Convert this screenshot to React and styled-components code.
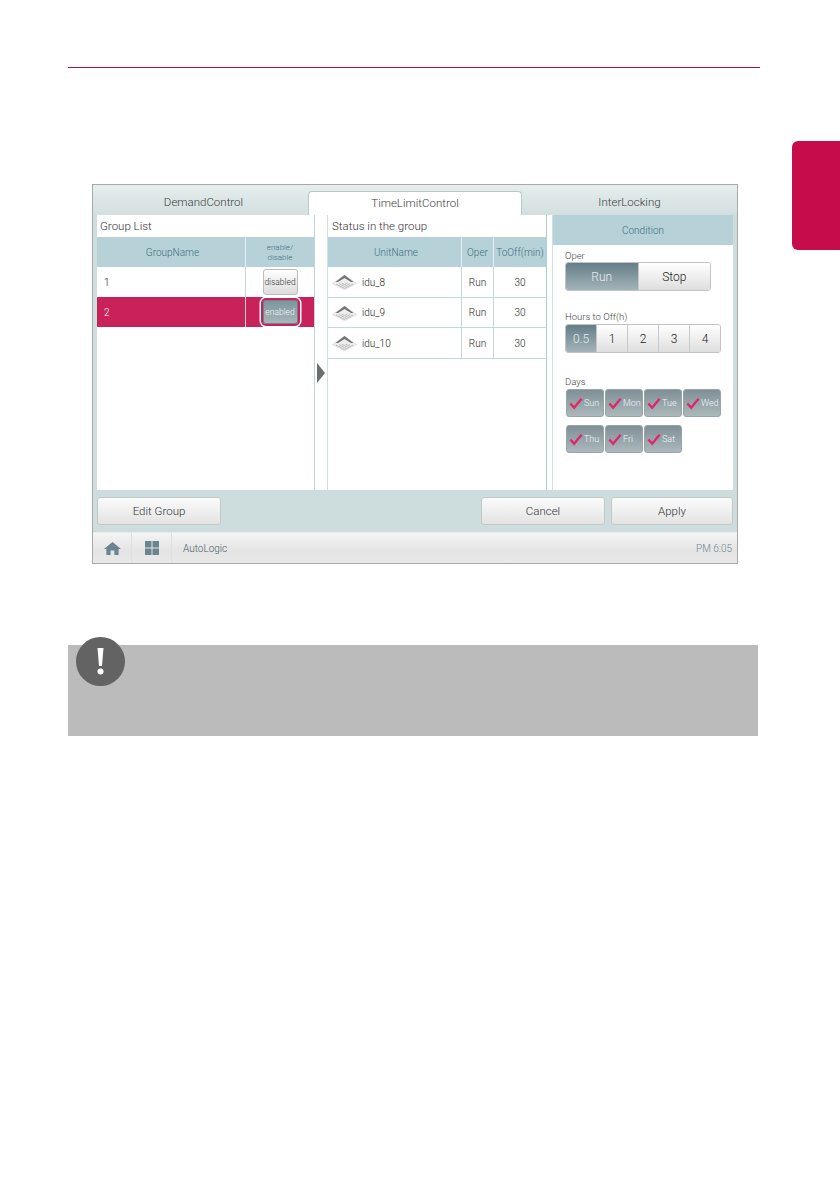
import styled, { createGlobalStyle } from 'styled-components';

const GlobalStyle = createGlobalStyle`
  html, body { margin: 0; padding: 0; background: #fff; }
  body { font-family: Roboto, "Liberation Sans", sans-serif; font-weight: 300; }
  * { box-sizing: border-box; }
`;

const Page = styled.div`
  width: 840px;
  height: 1192px;
  display: flex;
  overflow: hidden;
`;
const Main = styled.div`
  width: 692px;
  margin-left: 68px;
  padding-top: 67px;
`;
const TopRule = styled.div`
  height: 1px;
  background: #a61542;
`;
const SideTab = styled.div`
  width: 48px;
  height: 109px;
  margin: 141px 0 0 32px;
  background: #c60c4b;
  border-radius: 6px 0 0 6px;
`;

const Screen = styled.div`
  width: 646px;
  height: 380px;
  margin: 116px 0 0 24px;
  border: 1px solid #a9a9a9;
  background: #cddcdc;
  display: flex;
  flex-direction: column;
`;
const Tabs = styled.div`
  height: 30px;
  display: flex;
  background: linear-gradient(#e6eded, #d3dfdf);
`;
const Tab = styled.div`
  width: ${p => p.$w}px;
  margin-top: ${p => (p.$on ? 6 : 0)}px;
  height: ${p => (p.$on ? 24 : 30)}px;
  padding: ${p => (p.$on ? '0 0 2px' : `3px 0 0 ${p.$shift || 0}px`)};
  display: flex;
  align-items: center;
  justify-content: center;
  font-size: 11.5px;
  color: #3c3c3c;
  background: ${p => (p.$on ? '#fff' : 'transparent')};
  border-radius: ${p => (p.$on ? '4px 4px 0 0' : '0')};
  border: ${p => (p.$on ? '1px solid #b7c9cc' : 'none')};
  border-bottom: none;
`;

const Body = styled.div`
  height: 275px;
  margin-left: 4px;
  margin-right: 4px;
  background: #fff;
  display: flex;
`;
const Panel = styled.div`
  width: ${p => p.$w}px;
  border-right: ${p => (p.$edge ? `1px solid ${p.$edge}` : 'none')};
  border-left: ${p => (p.$start ? `1px solid ${p.$start}` : 'none')};
  display: flex;
  flex-direction: column;
`;
const PanelTitle = styled.div`
  height: 22px;
  padding-left: ${p => p.$pad || 3}px;
  display: flex;
  align-items: center;
  font-size: 11.5px;
  color: #333;
`;
const Row = styled.div`
  display: grid;
  grid-template-columns: ${p => p.$cols};
  height: ${p => p.$h || 30}px;
  background: ${p => (p.$sel ? '#c9215a' : p.$head ? '#b6d1d8' : '#fff')};
  border-bottom: ${p => (p.$line ? '1px solid #c4d8dc' : 'none')};
`;
const HeadCell = styled.div`
  display: flex;
  align-items: center;
  justify-content: center;
  padding: 2px 0 0 ${p => p.$shift || 0}px;
  text-align: center;
  font-size: ${p => p.$size || 10}px;
  line-height: 10px;
  color: #3f6f7b;
  border-right: ${p => (p.$line ? '1px solid #e4eef0' : 'none')};
`;
const Cell = styled.div`
  display: flex;
  align-items: center;
  justify-content: ${p => (p.$left ? 'flex-start' : 'center')};
  padding-left: ${p => (p.$left ? p.$pad || 7 : 0)}px;
  gap: 5px;
  font-size: 10px;
  color: ${p => (p.$sel ? '#fff' : '#222')};
  border-right: ${p => (p.$line ? '1px solid #c4d8dc' : 'none')};
`;
const ToggleBtn = styled.div`
  width: 35px;
  height: ${p => (p.$on ? 24 : 26)}px;
  border-radius: 3px;
  display: flex;
  align-items: center;
  justify-content: center;
  font-size: 8.5px;
  color: ${p => (p.$on ? '#f4f7f8' : '#333')};
  background: ${p => (p.$on ? 'linear-gradient(#7d959c, #a7b6ba)' : 'linear-gradient(#fff, #dcdcdc)')};
  border: 1px solid ${p => (p.$on ? '#6f858c' : '#bbb')};
  box-shadow: ${p => (p.$on ? '0 0 0 2px #c9215a, 0 0 0 3.5px #fff' : 'none')};
`;
const Gap = styled.div`
  width: ${p => p.$w}px;
  background: #fff;
  display: flex;
  align-items: center;
  justify-content: center;
  padding-top: 40px;
  border-right: ${p => (p.$edge ? `1px solid ${p.$edge}` : 'none')};
`;
const Arrow = styled.div`
  width: 0;
  height: 0;
  margin-left: -1px;
  border-top: 10.5px solid transparent;
  border-bottom: 10.5px solid transparent;
  border-left: 8px solid #6b6f72;
`;

const Condition = styled.div`
  width: 180px;
  display: flex;
  flex-direction: column;
`;
const CondHead = styled.div`
  height: 30px;
  background: #b6d1d8;
  color: #3f6f7b;
  font-size: 10px;
  display: flex;
  align-items: center;
  justify-content: center;
`;
const CondBody = styled.div`
  padding: 5px 0 0 12px;
`;
const FieldLabel = styled.div`
  font-size: 9.5px;
  line-height: 12px;
  height: ${p => p.$h || 12}px;
  margin-top: ${p => p.$top || 0}px;
  color: #444;
`;
const Segments = styled.div`
  display: flex;
  width: ${p => p.$w}px;
  height: 29px;
  border-radius: 3px;
  overflow: hidden;
  border: 1px solid #c0c4c5;
`;
const Segment = styled.div`
  flex: 1;
  display: flex;
  align-items: center;
  justify-content: center;
  font-size: 12px;
  color: ${p => (p.$on ? '#e8eeef' : '#222')};
  background: ${p => (p.$on ? 'linear-gradient(#647e87, #a3b4b9)' : 'linear-gradient(#fff, #dedede)')};
  border-right: ${p => (p.$last ? 'none' : '1px solid #c4c8c9')};
`;
const Days = styled.div`
  display: grid;
  grid-template-columns: repeat(4, 38px);
  gap: 8px 1px;
  margin-left: 1px;
`;
const Day = styled.div`
  height: 28px;
  border-radius: 3px;
  background: linear-gradient(#7f9096, #abb8bc);
  border: 1px solid #97a5a9;
  display: flex;
  align-items: center;
  gap: 1px;
  padding-left: 2px;
  font-size: 9px;
  color: #f4f7f8;
`;

const Actions = styled.div`
  height: 42px;
  padding: 7px 4px;
  display: flex;
  gap: 6px;
`;
const ActionBtn = styled.div`
  width: ${p => p.$w}px;
  height: 28px;
  margin-right: ${p => p.$after || 0}px;
  border-radius: 3px;
  background: linear-gradient(#fbfbfb, #e3e3e3);
  border: 1px solid #c2c8c8;
  display: flex;
  align-items: center;
  justify-content: center;
  font-size: 11.5px;
  color: #333;
`;
const StatusBar = styled.div`
  flex: 1;
  display: flex;
  align-items: center;
  background: linear-gradient(#f4f4f4, #e4e4e4 60%, #e9e9e9);
  border-top: 1px solid #e8eded;
`;
const BarIcon = styled.div`
  width: ${p => p.$w}px;
  height: 100%;
  display: flex;
  align-items: center;
  justify-content: center;
  border-right: 1px solid #dfe1e1;
`;
const BarLabel = styled.div`
  margin-left: 11px;
  font-size: 10px;
  color: #466069;
`;
const Clock = styled.div`
  margin-left: auto;
  margin-right: 5px;
  font-size: 10px;
  color: #6c8791;
`;

const Note = styled.div`
  position: relative;
  width: 690px;
  height: 91px;
  margin-top: 81px;
  background: #bbbbbb;
`;
const NoteBadge = styled.div`
  position: absolute;
  left: 8px;
  top: -8px;
  width: 49px;
  height: 49px;
  border-radius: 50%;
  background: #636363;
  display: flex;
  align-items: center;
  justify-content: center;
`;

const Cassette = () => (
  <svg width="25" height="16" viewBox="0 0 25 16" style={{ flex: 'none' }}>
    <path d="M0.5 9.5 L11.5 2 Q12.5 1.4 13.5 2 L24.5 9.5 L14 15 Q12.5 15.7 11 15 Z" fill="#eeeeee" stroke="#cfcfcf" strokeWidth="0.6" />
    <path d="M3.5 8 L12.5 1 L21.5 8 L19 8 L12.5 4 L6 8 Z" fill="#707273" />
    <path d="M4 10 L12.5 14.4 L21 10 M7 9.6 L12.5 12.5 L18 9.6 M9.5 9 L12.5 10.6 L15.5 9" fill="none" stroke="#b4b4b4" strokeWidth="0.9" />
  </svg>
);
const HomeIcon = () => (
  <svg width="17" height="15" viewBox="0 0 17 14">
    <path d="M8.5 0.5 L17 7.5 L14.6 7.5 L14.6 13.5 L10.4 13.5 L10.4 9 L6.6 9 L6.6 13.5 L2.4 13.5 L2.4 7.5 L0 7.5 Z" fill="#6a8490" />
  </svg>
);
const GridIcon = () => (
  <svg width="14" height="14" viewBox="0 0 14 14" fill="#6a8490">
    <rect x="0" y="0" width="6.5" height="6.5" />
    <rect x="7.5" y="0" width="6.5" height="6.5" />
    <rect x="0" y="7.5" width="6.5" height="6.5" />
    <rect x="7.5" y="7.5" width="6.5" height="6.5" />
  </svg>
);
const Check = () => (
  <svg width="14" height="13" viewBox="0 0 15 13" style={{ flex: 'none' }}>
    <path d="M1.5 6.5 L5.5 11 L13.5 1.5" fill="none" stroke="#e0256a" strokeWidth="2.6" />
  </svg>
);
const Bang = () => (
  <svg width="7" height="27" viewBox="0 0 7 27" fill="#fff">
    <path d="M0.5 0 H6.5 L5 18 H2 Z" />
    <circle cx="3.5" cy="23.5" r="3" />
  </svg>
);

const groupCols = '149px 68px';
const unitCols = '134px 32px 52px';
const units = [['idu_8', 31], ['idu_9', 30], ['idu_10', 31]];
const hours = ['0.5', '1', '2', '3', '4'];
const days = ['Sun', 'Mon', 'Tue', 'Wed', 'Thu', 'Fri', 'Sat'];

export default function App() {
  return (
    <Page>
      <GlobalStyle />
      <Main>
        <TopRule />
        <Screen>
          <Tabs>
            <Tab $w={215} $shift={6}>DemandControl</Tab>
            <Tab $w={214} $on>TimeLimitControl</Tab>
            <Tab $w={215}>InterLocking</Tab>
          </Tabs>
          <Body>
            <Panel $w={218} $edge="#bcd6da">
              <PanelTitle>Group List</PanelTitle>
              <Row $head $cols={groupCols}>
                <HeadCell $shift={3} $line>GroupName</HeadCell>
                <HeadCell $size={8}>enable/<br />disable</HeadCell>
              </Row>
              <Row $cols={groupCols}>
                <Cell $left $line>1</Cell>
                <Cell><ToggleBtn>disabled</ToggleBtn></Cell>
              </Row>
              <Row $sel $cols={groupCols}>
                <Cell $left $sel $line>2</Cell>
                <Cell><ToggleBtn $on>enabled</ToggleBtn></Cell>
              </Row>
            </Panel>
            <Gap $w={12}><Arrow /></Gap>
            <Panel $w={220} $edge="#a9cfd0" $start="#cfe0e3">
              <PanelTitle $pad={4}>Status in the group</PanelTitle>
              <Row $head $cols={unitCols}>
                <HeadCell $shift={3} $line>UnitName</HeadCell>
                <HeadCell $line>Oper</HeadCell>
                <HeadCell>ToOff(min)</HeadCell>
              </Row>
              {units.map(([name, h]) => (
                <Row key={name} $line $cols={unitCols} $h={h}>
                  <Cell $left $pad={4} $line><Cassette />{name}</Cell>
                  <Cell $line>Run</Cell>
                  <Cell>30</Cell>
                </Row>
              ))}
            </Panel>
            <Gap $w={6} $edge="#cfe0e3" />
            <Condition>
              <CondHead>Condition</CondHead>
              <CondBody>
                <FieldLabel>Oper</FieldLabel>
                <Segments $w={146}>
                  <Segment $on>Run</Segment>
                  <Segment $last>Stop</Segment>
                </Segments>
                <FieldLabel $top={20} $h={13}>Hours to Off(h)</FieldLabel>
                <Segments $w={156}>
                  {hours.map((h, i) => (
                    <Segment key={h} $on={i === 0} $last={i === 4}>{h}</Segment>
                  ))}
                </Segments>
                <FieldLabel $top={23} $h={13}>Days</FieldLabel>
                <Days>
                  {days.map(d => (
                    <Day key={d}><Check />{d}</Day>
                  ))}
                </Days>
              </CondBody>
            </Condition>
          </Body>
          <Actions>
            <ActionBtn $w={124} $after={254}>Edit Group</ActionBtn>
            <ActionBtn $w={124}>Cancel</ActionBtn>
            <ActionBtn $w={122}>Apply</ActionBtn>
          </Actions>
          <StatusBar>
            <BarIcon $w={39}><HomeIcon /></BarIcon>
            <BarIcon $w={40}><GridIcon /></BarIcon>
            <BarLabel>AutoLogic</BarLabel>
            <Clock>PM 6:05</Clock>
          </StatusBar>
        </Screen>
        <Note>
          <NoteBadge><Bang /></NoteBadge>
        </Note>
      </Main>
      <SideTab />
    </Page>
  );
}
